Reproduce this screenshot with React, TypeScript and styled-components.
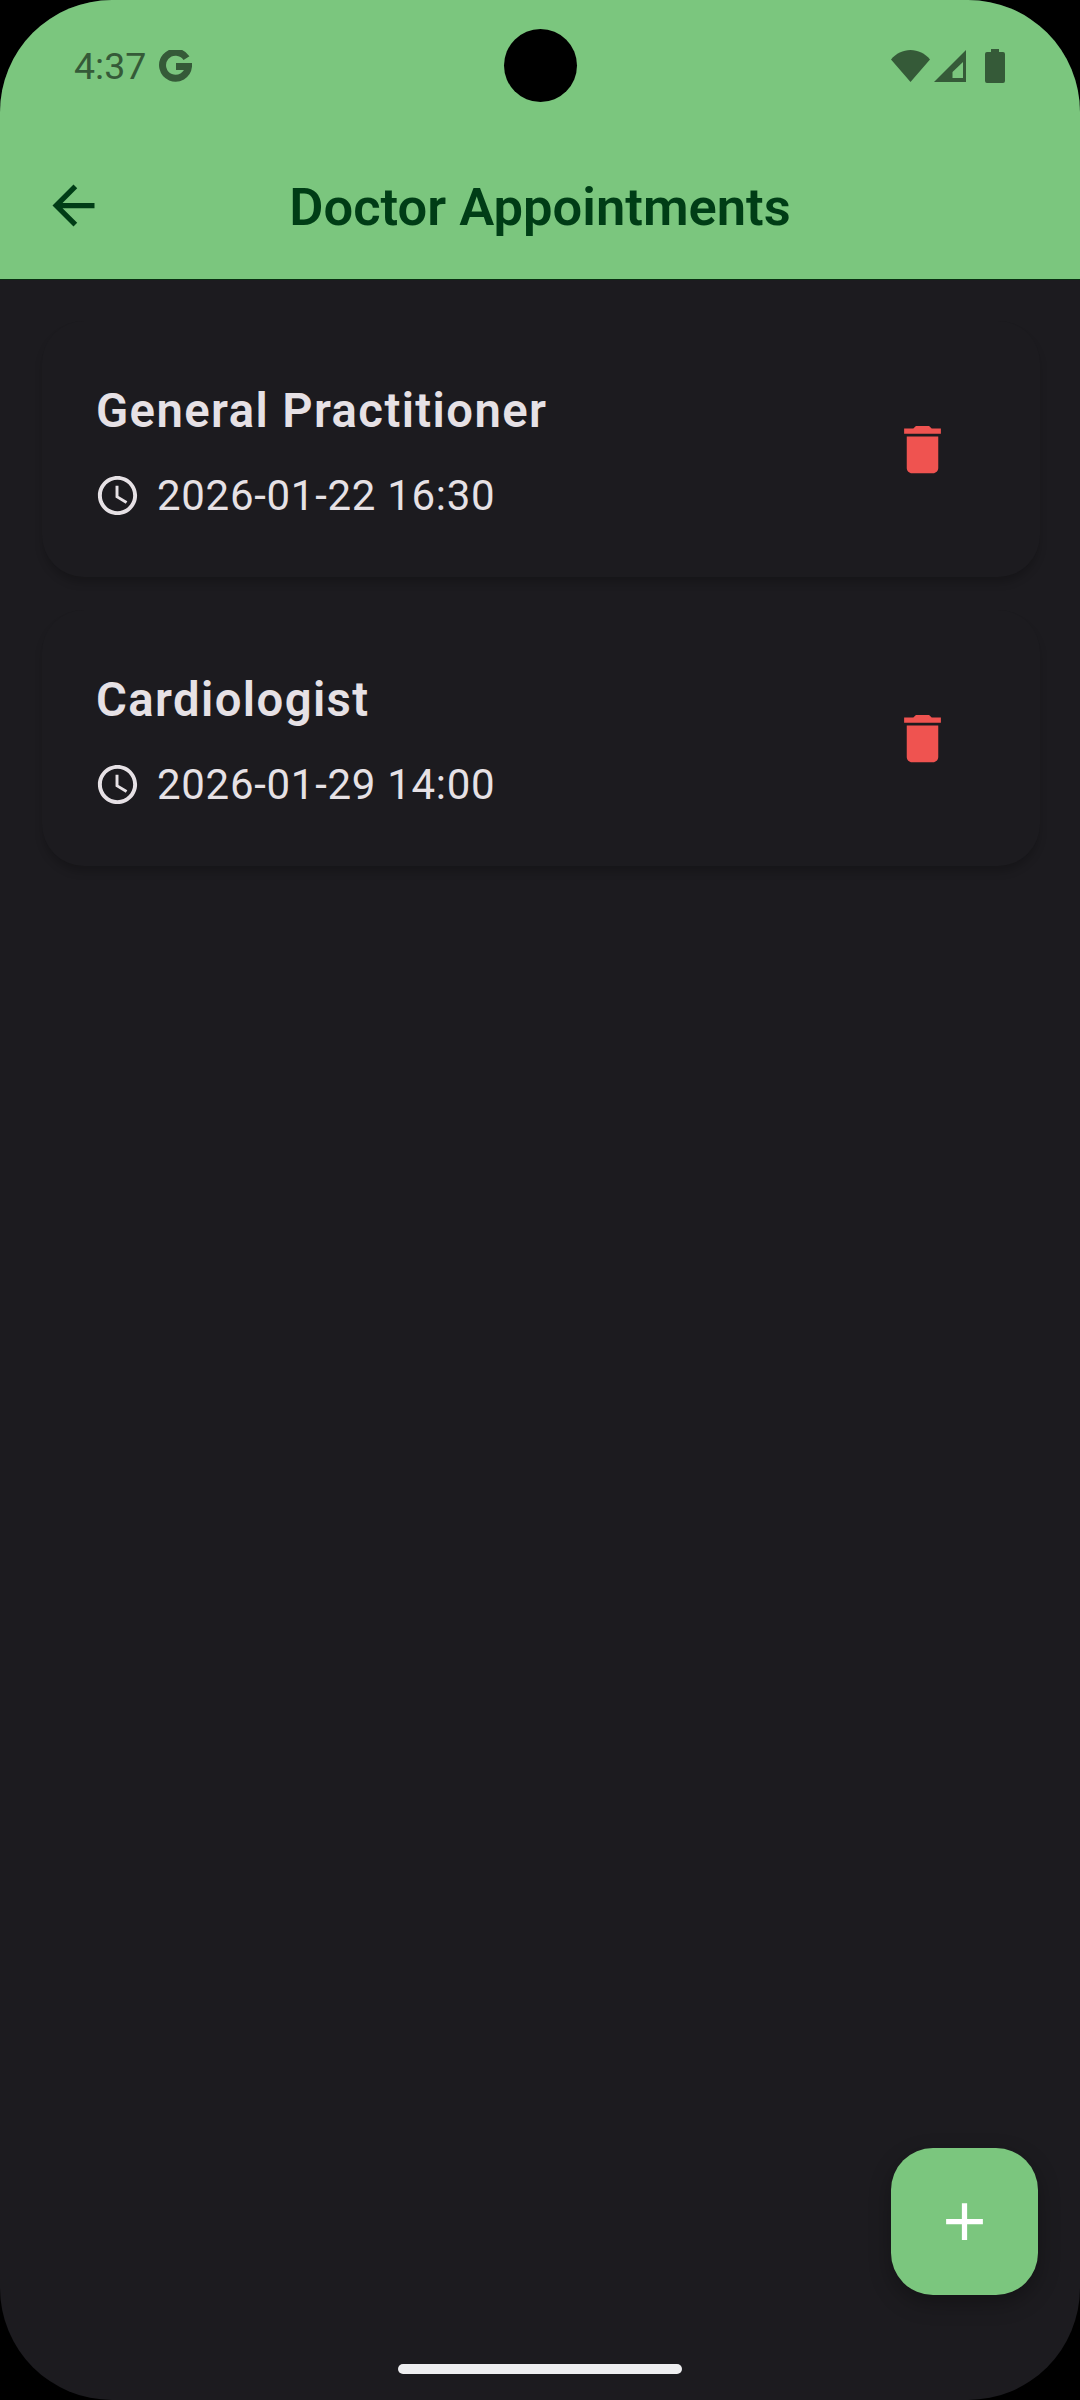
import React from "react";
import styled, { createGlobalStyle } from "styled-components";

const Global = createGlobalStyle`
  html, body { margin: 0; padding: 0; background: #000; }
  * { box-sizing: border-box; }
`;

const Screen = styled.div`
  position: relative;
  width: 1080px;
  height: 2400px;
  overflow: hidden;
  display: flex;
  flex-direction: column;
  background: #1c1b1f;
  border-radius: 112px;
  font-family: Roboto, "Liberation Sans", sans-serif;
`;

const Header = styled.header`
  background: #7bc67e;
  border-bottom: 1px solid #0a2e12;
  height: 280px;
  flex: none;
`;

const StatusBar = styled.div`
  height: 132px;
  padding: 0 75px 0 74px;
  display: flex;
  align-items: center;
  justify-content: space-between;
  color: #355a38;
`;

const StatusGroup = styled.div<{ $gap: number }>`
  display: flex;
  align-items: center;
  gap: ${(p) => p.$gap}px;
`;

const Time = styled.span`
  font-size: 37.5px;
  line-height: 38px;
  font-weight: 400;
`;

const Camera = styled.div`
  position: absolute;
  left: 504px;
  top: 29px;
  width: 73px;
  height: 73px;
  border-radius: 50%;
  background: #000;
`;

const AppBar = styled.div`
  height: 147px;
  padding: 0 42px;
  display: grid;
  grid-template-columns: 1fr auto 1fr;
  align-items: center;
  color: #003d16;
`;

const Title = styled.h1`
  margin: 2px 0 0;
  font-size: 52.5px;
  line-height: 62px;
  font-weight: 600;
`;

const Main = styled.main`
  flex: 1;
  padding: 41px 40px 42px 42px;
  display: flex;
  flex-direction: column;
  gap: 33px;
`;

const Card = styled.article`
  height: 256px;
  border-radius: 42px;
  padding: 0 55px 0 54px;
  background: #1c1b1f;
  box-shadow: 0 7px 8px -1px rgba(0, 0, 0, 0.2);
  display: flex;
  align-items: center;
  justify-content: space-between;
`;

const CardBody = styled.div`
  padding-top: 4px;
  display: flex;
  flex-direction: column;
  gap: 33px;
`;

const CardTitle = styled.h2`
  margin: 0;
  font-size: 47.25px;
  line-height: 55px;
  font-weight: 600;
  letter-spacing: 1.4px;
  color: #e6e1e5;
`;

const TimeRow = styled.div`
  display: flex;
  align-items: center;
  gap: 16px;
  color: #e6e1e5;
  font-size: 42px;
  line-height: 47px;
  letter-spacing: 0.7px;
`;

const ClockIcon = styled.svg`
  width: 47px;
  height: 47px;
  margin-left: -2px;
  fill: currentColor;
  flex: none;
`;

const DeleteButton = styled.button`
  width: 126px;
  height: 126px;
  padding: 0;
  border: 0;
  background: none;
  color: #ef5350;
  display: flex;
  align-items: center;
  justify-content: center;
`;

const MaterialIcon = styled.svg<{ $size: number }>`
  width: ${(p) => p.$size}px;
  height: ${(p) => p.$size}px;
  fill: currentColor;
  display: block;
`;

const Fab = styled.button`
  position: absolute;
  left: 891px;
  top: 2148px;
  width: 147px;
  height: 147px;
  padding: 0;
  border: 0;
  border-radius: 42px;
  background: #7bc67e;
  color: #fff;
  box-shadow: 0 8px 22px rgba(0, 0, 0, 0.3);
  display: flex;
  align-items: center;
  justify-content: center;
`;

const HomeIndicator = styled.div`
  position: absolute;
  left: 398px;
  top: 2364px;
  width: 284px;
  height: 10px;
  border-radius: 5px;
  background: #eeeef0;
`;

const appointments = [
  { id: 1, name: "General Practitioner", when: "2026-01-22 16:30" },
  { id: 2, name: "Cardiologist", when: "2026-01-29 14:00" },
];

export default function App() {
  return (
    <>
      <Global />
      <Screen>
        <Header>
          <StatusBar>
            <StatusGroup $gap={13}>
              <Time>4:37</Time>
              <svg width="33" height="33" viewBox="0 0 33 33" fill="none">
                <path
                  d="M27.5 8.2A13 13 0 1 0 29.5 16.5H17"
                  stroke="currentColor"
                  strokeWidth="7"
                />
              </svg>
            </StatusGroup>
            <StatusGroup $gap={4}>
              <svg width="39" height="32" viewBox="0 0 39 32" fill="currentColor">
                <path d="M0 9.5C5 3.5 12 0 19.5 0S34 3.5 39 9.5L19.5 32z" />
              </svg>
              <svg width="32" height="32" viewBox="0 0 32 32" fill="currentColor">
                <path
                  fillRule="evenodd"
                  d="M32 0V32H0zM29 12 18.5 22V28H29z"
                />
              </svg>
              <svg
                width="20"
                height="34"
                viewBox="0 0 20 34"
                fill="currentColor"
                style={{ marginLeft: 15 }}
              >
                <path d="M6 0H14V3H18a2 2 0 0 1 2 2V32a2 2 0 0 1-2 2H2a2 2 0 0 1-2-2V5a2 2 0 0 1 2-2H6z" />
              </svg>
            </StatusGroup>
          </StatusBar>
          <AppBar>
            <MaterialIcon $size={63} viewBox="0 0 24 24">
              <path d="M20 11H7.83l5.59-5.59L12 4l-8 8 8 8 1.41-1.41L7.83 13H20v-2z" />
            </MaterialIcon>
            <Title>Doctor Appointments</Title>
          </AppBar>
        </Header>
        <Camera />
        <Main>
          {appointments.map((a) => (
            <Card key={a.id}>
              <CardBody>
                <CardTitle>{a.name}</CardTitle>
                <TimeRow>
                  <ClockIcon viewBox="0 0 24 24">
                    <path d="M11.99 2C6.47 2 2 6.48 2 12s4.47 10 9.99 10C17.52 22 22 17.52 22 12S17.52 2 11.99 2zM12 20c-4.42 0-8-3.58-8-8s3.58-8 8-8 8 3.58 8 8-3.58 8-8 8zm.5-13H11v6l5.25 3.15.75-1.23-4.5-2.67z" />
                  </ClockIcon>
                  {a.when}
                </TimeRow>
              </CardBody>
              <DeleteButton aria-label="Delete">
                <MaterialIcon $size={63} viewBox="0 0 24 24">
                  <path d="M6 19c0 1.1.9 2 2 2h8c1.1 0 2-.9 2-2V7H6v12zM19 4h-3.5l-1-1h-5l-1 1H5v2h14V4z" />
                </MaterialIcon>
              </DeleteButton>
            </Card>
          ))}
        </Main>
        <Fab aria-label="Add">
          <MaterialIcon $size={63} viewBox="0 0 24 24">
            <path d="M19 13h-6v6h-2v-6H5v-2h6V5h2v6h6v2z" />
          </MaterialIcon>
        </Fab>
        <HomeIndicator />
      </Screen>
    </>
  );
}
